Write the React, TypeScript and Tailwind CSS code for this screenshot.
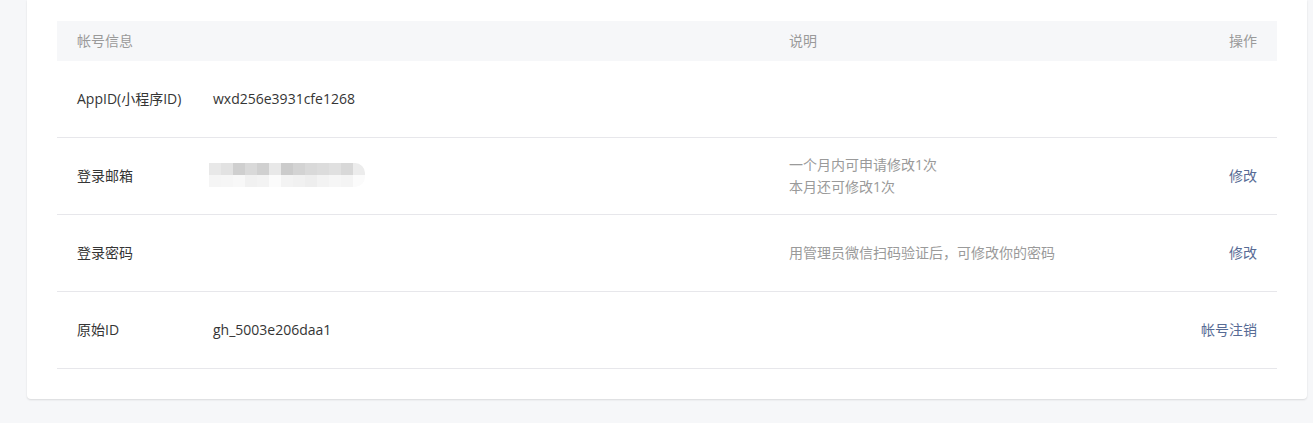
import React from 'react';

const topCells = [
  'bg-[#e8e8e8]', 'bg-[#e2e2e2]', 'bg-[#cfcfcf]', 'bg-[#d9d9d9]', 'bg-[#d0d0d0]', 'bg-[#e8e8e8]',
  'bg-[#cbcbcb]', 'bg-[#d3d3d3]', 'bg-[#d9d9d9]', 'bg-[#dcdcdc]', 'bg-[#e0e0e0]', 'bg-[#d8d8d8]', 'bg-[#ececec]',
];
const bottomCells = [
  'bg-[#f5f5f5]', 'bg-[#f6f6f6]', 'bg-[#f8f8f8]', 'bg-[#f1f1f1]', 'bg-[#f3f3f3]', 'bg-[#fbfbfb]',
  'bg-[#f3f3f3]', 'bg-[#f1f1f1]', 'bg-[#eeeeee]', 'bg-[#f3f3f3]', 'bg-[#f6f6f6]', 'bg-[#f4f4f4]', 'bg-[#fbfbfb]',
];

// pixelated (masked) email
const BlurredEmail = () => (
  <div className="flex flex-col overflow-hidden rounded-r-[10px] -ml-[4px] -mt-[2px] w-[156px]">
    <div className="flex h-[12px]">
      {topCells.map((c, i) => (
        <div key={i} className={`w-[12px] h-full ${c}`} />
      ))}
    </div>
    <div className="flex h-[12px]">
      {bottomCells.map((c, i) => (
        <div key={i} className={`w-[12px] h-full ${c}`} />
      ))}
    </div>
  </div>
);

interface Row {
  label: string;
  value?: React.ReactNode;
  desc?: string[];
  action?: string;
}

const rows: Row[] = [
  { label: 'AppID(小程序ID)', value: 'wxd256e3931cfe1268' },
  { label: '登录邮箱', value: <BlurredEmail />, desc: ['一个月内可申请修改1次', '本月还可修改1次'], action: '修改' },
  { label: '登录密码', desc: ['用管理员微信扫码验证后，可修改你的密码'], action: '修改' },
  { label: '原始ID', value: 'gh_5003e206daa1', action: '帐号注销' },
];

export default function App() {
  return (
    <div
      className="min-h-[423px] bg-[#f6f7f9] text-[14px] leading-[20px] text-[#353535]"
      style={{ fontFamily: '"Open Sans", "Noto Sans CJK SC", sans-serif' }}
    >
      <div className="ml-[27px] mr-[6px] bg-white rounded-b-[4px] shadow-[0_1px_2px_rgba(0,0,0,0.12)] px-[30px] pt-[21px] pb-[30px]">
        <div className="grid grid-cols-[732px_1fr_auto] h-[40px] items-center bg-[#f6f7f9] text-[#9a9a9a]">
          <div className="pl-[20px]">帐号信息</div>
          <div>说明</div>
          <div className="pr-[20px] text-right">操作</div>
        </div>
        {rows.map((r) => (
          <div
            key={r.label}
            className="grid grid-cols-[732px_1fr_auto] h-[77px] items-center border-b border-[#e7e7eb]"
          >
            <div className="pl-[20px] flex items-center">
              <span className="w-[136px] shrink-0">{r.label}</span>
              {r.value && <span>{r.value}</span>}
            </div>
            <div className="text-[#9a9a9a] leading-[22px]">
              {r.desc?.map((d) => (
                <div key={d}>{d}</div>
              ))}
            </div>
            <div className="pr-[20px] text-right">
              {r.action && <a className="text-[#576b95] cursor-pointer">{r.action}</a>}
            </div>
          </div>
        ))}
      </div>
    </div>
  );
}
